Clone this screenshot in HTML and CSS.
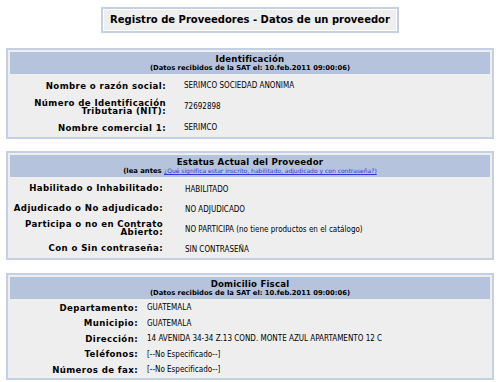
FILE: index.html
```html
<!DOCTYPE html>
<html lang="es">
  <head>
    <meta charset="utf-8" />
    <title>Registro de Proveedores - Datos de un proveedor</title>
    <link rel="stylesheet" href="styles.css">
  </head>
  <body class="page">
    <div class="title-wrap">
      <div class="title-box">
        <div class="title-inner">Registro de Proveedores - Datos de un proveedor</div>
      </div>
    </div>

    <div class="section sec-ident">
      <div class="section-head">
        <div class="head-title">Identificación</div>
        <div class="head-sub">(Datos recibidos de la SAT el: 10.feb.2011 09:00:06)</div>
      </div>
      <div class="row">
        <div class="label">Nombre o razón social:</div>
        <div class="value">SERIMCO SOCIEDAD ANONIMA</div>
      </div>
      <div class="row">
        <div class="label">Número de Identificación Tributaria (NIT):</div>
        <div class="value">72692898</div>
      </div>
      <div class="row">
        <div class="label">Nombre comercial 1:</div>
        <div class="value">SERIMCO</div>
      </div>
    </div>

    <div class="section sec-status">
      <div class="section-head">
        <div class="head-title">Estatus Actual del Proveedor</div>
        <div class="head-sub">(lea antes <a class="head-link" href="#">¿Qué significa estar inscrito, habilitado, adjudicado y con contraseña?)</a></div>
      </div>
      <div class="row">
        <div class="label">Habilitado o Inhabilitado:</div>
        <div class="value">HABILITADO</div>
      </div>
      <div class="row">
        <div class="label">Adjudicado o No adjudicado:</div>
        <div class="value">NO ADJUDICADO</div>
      </div>
      <div class="row">
        <div class="label">Participa o no en Contrato Abierto:</div>
        <div class="value">NO PARTICIPA (no tiene productos en el catálogo)</div>
      </div>
      <div class="row">
        <div class="label">Con o Sin contraseña:</div>
        <div class="value">SIN CONTRASEÑA</div>
      </div>
    </div>

    <div class="section sec-fiscal">
      <div class="section-head">
        <div class="head-title">Domicilio Fiscal</div>
        <div class="head-sub">(Datos recibidos de la SAT el: 10.feb.2011 09:00:06)</div>
      </div>
      <div class="row">
        <div class="label">Departamento:</div>
        <div class="value">GUATEMALA</div>
      </div>
      <div class="row">
        <div class="label">Municipio:</div>
        <div class="value">GUATEMALA</div>
      </div>
      <div class="row">
        <div class="label">Dirección:</div>
        <div class="value">14 AVENIDA 34-34 Z.13 COND. MONTE AZUL APARTAMENTO 12 C</div>
      </div>
      <div class="row">
        <div class="label">Teléfonos:</div>
        <div class="value">[--No Especificado--]</div>
      </div>
      <div class="row">
        <div class="label">Números de fax:</div>
        <div class="value">[--No Especificado--]</div>
      </div>
    </div>
  </body>
</html>
```

FILE: styles.css
```css
body {
  margin: 0;
  padding: 7px 6px 0;
  background-color: #ffffff;
}

.page {
  font-family: "DejaVu Sans", Verdana, sans-serif;
  color: #000000;
  font-size: 8px;
}

.title-wrap {
  display: flex;
  justify-content: center;
  margin-bottom: 15px;
}
.title-box {
  border: 2px solid #c6d0e4;
  padding: 1px;
}
.title-inner {
  background-color: #eeeeee;
  font-size: 10px;
  font-weight: bold;
  padding: 4px 6px;
  line-height: 12px;
}

.section {
  border: 2px solid #c6d0e4;
  background-color: #eeeeee;
  padding: 2px 2px 1px;
  margin-bottom: 13px;
}
.section-head {
  background-color: #b6c3dc;
  text-align: center;
  padding: 3px 0 2px;
}
.head-title {
  font-weight: bold;
  font-size: 8.6px;
  letter-spacing: 0.2px;
  line-height: 9px;
}
.head-sub {
  font-weight: bold;
  font-size: 6.8px;
  line-height: 8px;
}
.head-link {
  color: #2a3dd0;
  font-weight: normal;
  font-size: 6px;
}

.row {
  display: grid;
  align-items: center;
  margin-top: 2px;
}
.label {
  font-weight: bold;
  font-size: 8.6px;
  text-align: right;
  letter-spacing: 0.4px;
  line-height: 8px;
}
.value {
  font-family: "DejaVu Sans Condensed", "DejaVu Sans", sans-serif;
  font-size: 8px;
  line-height: 9px;
}

.sec-ident {
  padding-bottom: 0;
  margin-bottom: 12px;
}
.sec-ident .row {
  grid-template-columns: 174px 1fr;
  min-height: 19px;
}
.sec-ident .label { padding-right: 18px; }

.sec-status .row {
  grid-template-columns: 175px 1fr;
  min-height: 18px;
}
.sec-status .label { padding-right: 22px; }
.sec-status .value { padding-top: 3px; }

.sec-fiscal .row {
  grid-template-columns: 137px 1fr;
  min-height: 13.5px;
}
.sec-fiscal .label { padding-right: 9px; }
```
